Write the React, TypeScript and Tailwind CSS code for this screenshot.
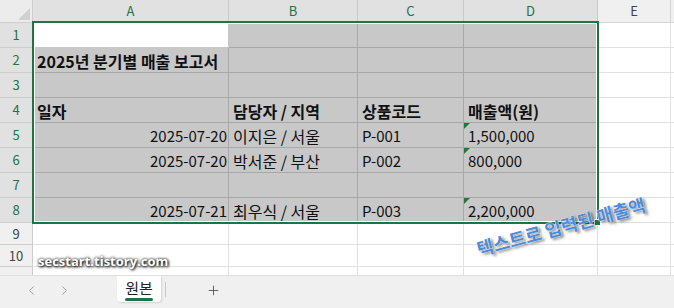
import { ChevronLeft, ChevronRight, Plus } from 'lucide-react';

type Cell = { t?: string; r?: boolean; b?: boolean; tri?: boolean; white?: boolean; ko?: boolean };

const colWidths = ['w-[196px]', 'w-[129px]', 'w-[106px]', 'w-[134px]'];
const colNames = ['A', 'B', 'C', 'D'];

const rows: Cell[][] = [
  [{ white: true }, {}, {}, {}],
  [{ t: '2025년 분기별 매출 보고서', b: true, ko: true }, {}, {}, {}],
  [{}, {}, {}, {}],
  [
    { t: '일자', b: true, ko: true },
    { t: '담당자 / 지역', b: true, ko: true },
    { t: '상품코드', b: true, ko: true },
    { t: '매출액(원)', b: true, ko: true },
  ],
  [{ t: '2025-07-20', r: true }, { t: '이지은 / 서울', ko: true }, { t: 'P-001' }, { t: '1,500,000', tri: true }],
  [{ t: '2025-07-20', r: true }, { t: '박서준 / 부산', ko: true }, { t: 'P-002' }, { t: '800,000', tri: true }],
  [{}, {}, {}, {}],
  [{ t: '2025-07-21', r: true }, { t: '최우식 / 서울', ko: true }, { t: 'P-003' }, { t: '2,200,000', tri: true }],
];

function DataCell({ cell, width }: { cell: Cell; width: string }) {
  return (
    <div
      className={`relative ${width} shrink-0 flex items-center pt-[2px] border-r border-b ${
        cell.white ? 'bg-white border-[#c8c8c8]' : 'bg-[#c8c8c8] border-[#a8a8a8]'
      } ${cell.r ? 'justify-end pr-[1px]' : 'pl-[4px]'}`}
    >
      {cell.tri && (
        <div className="absolute left-0 top-0 w-0 h-0 border-t-[6px] border-r-[6px] border-t-[#1e7a3c] border-r-transparent" />
      )}
      {cell.t && (
        <span
          className={`whitespace-nowrap text-[#111] ${cell.ko ? 'text-[16px]' : 'text-[15px]'} ${
            cell.b ? 'font-bold' : ''
          }`}
        >
          {cell.t}
        </span>
      )}
    </div>
  );
}

function RowHeader({ n, selected }: { n?: number; selected: boolean }) {
  return (
    <div
      className={`w-[33px] shrink-0 flex items-center justify-center border-r border-b border-[#cdcdcd] text-[13px] ${
        selected ? 'bg-[#e1e1e1] text-[#217346]' : 'bg-[#f0f0f0] text-[#444]'
      }`}
    >
      {n}
    </div>
  );
}

function EmptyRow({ n, h }: { n?: number; h: string }) {
  return (
    <div className={`flex shrink-0 ${h}`}>
      <RowHeader n={n} selected={false} />
      {colWidths.map((w, i) => (
        <div key={i} className={`${w} shrink-0 border-r border-b border-[#e1e1e1]`} />
      ))}
      <div className="w-[73px] shrink-0 border-r border-b border-[#e1e1e1]" />
      <div className="flex-1 border-b border-[#e1e1e1]" />
    </div>
  );
}

export default function App() {
  return (
    <div className="relative w-[674px] h-[308px] overflow-hidden bg-white font-['Noto_Sans_CJK_KR','Noto_Sans',sans-serif]">
      <div className="flex flex-col h-[275px] overflow-hidden">
        {/* column headers */}
        <div className="flex shrink-0 h-[23px]">
          <div className="relative w-[33px] shrink-0 bg-[#ececec] border-r border-b border-[#cdcdcd]">
            <svg className="absolute right-[2px] bottom-[2px]" width="12" height="12" viewBox="0 0 12 12">
              <polygon points="12,0 12,12 0,12" fill="#d0d0d0" />
            </svg>
          </div>
          {colNames.map((c, i) => (
            <div
              key={c}
              className={`${colWidths[i]} shrink-0 flex items-center justify-center bg-[#e1e1e1] border-r border-b border-[#c9c9c9] text-[13px] text-[#217346]`}
            >
              {c}
            </div>
          ))}
          <div className="w-[73px] shrink-0 flex items-center justify-center bg-[#f0f0f0] border-r border-b border-[#d4d4d4] text-[13px] text-[#444]">
            E
          </div>
          <div className="flex-1 bg-[#f0f0f0] border-b border-[#d4d4d4]" />
        </div>

        {rows.map((row, ri) => (
          <div key={ri} className="flex shrink-0 h-[25px]">
            <RowHeader n={ri + 1} selected />
            {row.map((cell, ci) => (
              <DataCell key={ci} cell={cell} width={colWidths[ci]} />
            ))}
            <div className="w-[73px] shrink-0 border-r border-b border-[#e1e1e1]" />
            <div className="flex-1 border-b border-[#e1e1e1]" />
          </div>
        ))}

        <EmptyRow n={9} h="h-[22px]" />
        <EmptyRow n={10} h="h-[22px]" />
        <EmptyRow h="h-[22px]" />
      </div>

      {/* sheet tabs */}
      <div className="flex items-start h-[33px] bg-[#f0f0f0] border-t border-[#e0e0e0] text-[#8a8a8a]">
        <div className="ml-[24px] mt-[7px] flex items-center gap-[18px]">
          <ChevronLeft size={15} strokeWidth={1.3} />
          <ChevronRight size={15} strokeWidth={1.3} />
        </div>
        <div className="ml-[45px] h-[26px] w-[44px] flex flex-col items-center bg-white rounded-b-[4px] shadow-[1px_1px_2px_rgba(0,0,0,0.12)]">
          <span className="mt-[2px] text-[15px] leading-[19px] text-[#222]">원본</span>
          <div className="mt-[1px] w-[28px] h-[3px] rounded-full bg-[#217346]" />
        </div>
        <div className="ml-[4px] mt-[6px] w-px h-[15px] bg-[#c8c8c8]" />
        <div className="ml-[40px] mt-[7px] text-[#444]">
          <Plus size={15} strokeWidth={1.3} />
        </div>
      </div>

      {/* selection border */}
      <div className="absolute left-[32px] top-[21px] w-[567px] h-[203px] border-2 border-[#217346] shadow-[inset_0_0_0_1px_#fff]" />
      <div className="absolute left-[594px] top-[219px] w-[7px] h-[7px] bg-[#217346] border border-white" />

      {/* watermarks */}
      <div className="absolute left-[38px] top-[252px] text-[13px] font-bold text-white font-['Open_Sans',sans-serif] [text-shadow:0_0_3px_#000,1px_1px_3px_#000]">
        secstart.tistory.com
      </div>
      <div className="absolute left-[468px] top-[213px] w-[186px] text-center rotate-[-15deg] text-[18px] font-bold text-[#4f8ad6] [text-shadow:0_0_1px_#fff,0_0_1px_#fff,2px_2px_3px_rgba(0,0,0,0.55)] whitespace-nowrap">
        텍스트로 입력된 매출액
      </div>
    </div>
  );
}
